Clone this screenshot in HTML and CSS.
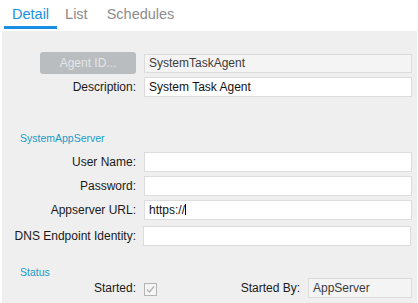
FILE: index.html
```html
<!DOCTYPE html>
<html lang="en">

<head>
    <meta charset="UTF-8">
    <title>Agent Detail</title>
    <link rel="stylesheet" href="styles.css">
</head>

<body>
    <div class="tabs">
        <div class="tab tab_active">Detail</div>
        <div class="tab">List</div>
        <div class="tab">Schedules</div>
    </div>
    <div class="panel">
        <div class="row row_agent">
            <div class="agent_button">Agent ID...</div>
            <div class="field field_readonly">SystemTaskAgent</div>
        </div>
        <div class="row">
            <div class="label">Description:</div>
            <div class="field">System Task Agent</div>
        </div>

        <div class="section_title section_server">SystemAppServer</div>
        <div class="row">
            <div class="label">User Name:</div>
            <div class="field"></div>
        </div>
        <div class="row">
            <div class="label">Password:</div>
            <div class="field"></div>
        </div>
        <div class="row">
            <div class="label">Appserver URL:</div>
            <div class="field">https://<span class="caret"></span></div>
        </div>
        <div class="row row_dns">
            <div class="label">DNS Endpoint Identity:</div>
            <div class="field field_dns"></div>
        </div>

        <div class="section_title section_status">Status</div>
        <div class="row row_status">
            <div class="label">Started:</div>
            <div class="checkbox">
                <svg width="13" height="13" viewBox="0 0 13 13">
                    <rect x="0.5" y="0.5" width="12" height="12" fill="#f4f4f4" stroke="#b4b4b4"/>
                    <path d="M3 6.5 L5.5 9 L10 3.5" fill="none" stroke="#b0b0b0" stroke-width="1.2"/>
                </svg>
            </div>
            <div class="label">Started By:</div>
            <div class="field field_readonly">AppServer</div>
        </div>
    </div>
</body>

</html>
```

FILE: styles.css
```css
body {
    margin: 0;
    background-color: white;
    font-family: "Liberation Sans", Arial, sans-serif;
    font-size: 12px;
    color: #1a1a1a;
    height: 303px;
    display: flex;
    flex-direction: column;
}

.tabs {
    display: flex;
    padding-left: 4px;
    height: 29px;
    margin-bottom: 2px;
}

.tab {
    padding: 6px 8px 0px 8px;
    margin-right: 3px;
    font-size: 14.5px;
    color: #8c8c8c;
    box-sizing: border-box;
}

.tab_active {
    color: #1b8fe6;
    border-bottom: 3px solid #1b8fe6;
    margin-right: 0px;
}

.panel {
    flex: 1;
    margin-left: 2px;
    margin-right: 1px;
    padding-top: 21px;
    padding-right: 5px;
    background-color: #efefef;
}

.row {
    display: grid;
    grid-template-columns: 134px 1fr;
    column-gap: 8px;
    align-items: center;
    height: 20px;
    margin-bottom: 4px;
}

.row_agent {
    height: 22px;
    margin-bottom: 3px;
}

/* sibling margins collapse, so these are the full spacing */
.row_dns {
    margin-top: 6px;
}

.row_status {
    grid-template-columns: 134px 13px 1fr 104px;
}

.label {
    text-align: right;
    white-space: nowrap;
}

.agent_button {
    justify-self: end;
    width: 96px;
    height: 22px;
    line-height: 22px;
    text-align: center;
    border-radius: 3px;
    background-color: #babdc0;
    color: #e3e5e7;
}

.field {
    height: 20px;
    line-height: 18px;
    box-sizing: border-box;
    border: 1px solid #dcdcdc;
    background-color: white;
    padding-left: 4px;
    color: #111;
    white-space: nowrap;
}

.row_agent .field {
    height: 19px;
    line-height: 17px;
}

.field_readonly {
    background-color: #f4f4f4;
    color: #3c3c3c;
}

.field_dns {
    margin-left: -1px;
    margin-right: 1px;
}

.caret {
    display: inline-block;
    width: 1px;
    height: 11px;
    background-color: black;
    vertical-align: -1px;
}

.checkbox {
    height: 13px;
    margin-top: 2px;
}

.checkbox svg {
    display: block;
}

.section_title {
    padding-left: 18px;
    font-size: 10.5px;
    color: #1a9bc7;
}

.section_server {
    margin-top: 34px;
    height: 14px;
    line-height: 14px;
    margin-bottom: 7px;
}

.section_status {
    margin-top: 20px;
    height: 12px;
    line-height: 12px;
}
```
